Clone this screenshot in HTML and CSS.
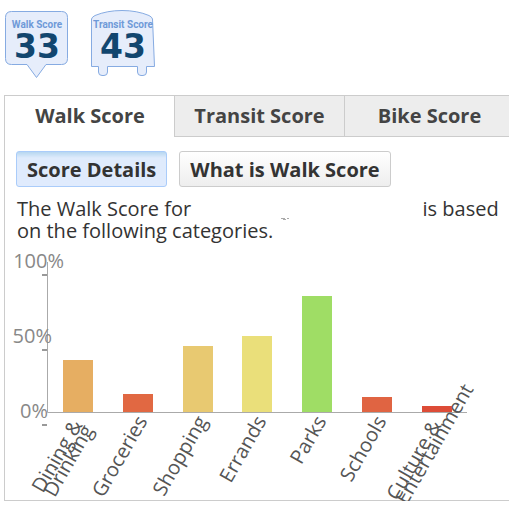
FILE: index.html
```html
<!DOCTYPE html>
<html lang="en">
<head>
    <meta charset="UTF-8">
    <meta name="viewport" content="width=device-width, initial-scale=1.0">
    <title>Walk Score</title>
    <link rel="stylesheet" href="styles.css">
</head>
<body>
    <div class="badges">
        <svg class="badge" width="66" height="72" viewBox="0 0 66 72">
            <path class="badge-shape" d="M7.5 1.5H57.5Q63.5 1.5 63.5 7.5V48.5Q63.5 54.5 57.5 54.5H42L32.5 67.5L23 54.5H7.5Q1.5 54.5 1.5 48.5V7.5Q1.5 1.5 7.5 1.5Z"/>
            <text class="badge-label" x="33" y="18">Walk Score</text>
            <text class="badge-score" x="33" y="48">33</text>
        </svg>
        <svg class="badge" width="66" height="72" viewBox="0 0 66 72">
            <path class="badge-shape" d="M1.5 9Q2 7 5 5.500Q17 0.500 32 0.500Q47 0.500 59 5.500Q62 7 62.500 9L64.500 56.500H56.500V62Q56.500 65.500 53 65.500H51Q47.500 65.500 47.500 62V56.500H17.500V62Q17.500 65.500 14 65.500H12Q8.500 65.500 8.500 62V56.500H1.500Z"/>
            <text class="badge-label" x="33" y="18">Transit Score</text>
            <text class="badge-score" x="33" y="48">43</text>
        </svg>
    </div>
    <div class="panel">
        <div class="tabs">
            <button type="button" class="tab active">Walk Score</button>
            <button type="button" class="tab">Transit Score</button>
            <button type="button" class="tab">Bike Score</button>
        </div>
        <div class="content">
            <div class="buttons">
                <button type="button" class="btn selected">Score Details</button>
                <button type="button" class="btn">What is Walk Score</button>
            </div>
            <p class="summary">The Walk Score for <svg class="address" width="221" height="6" viewBox="0 0 221 6"><path d="M85 4.500H89M87 5.500H90M91 4.500H93"/></svg> is based on the following categories.</p>
        </div>
        <svg class="chart" width="480" height="254" viewBox="0 0 480 254">
            <rect x="58" y="114" width="30" height="52" fill="#e6ae62"/>
            <rect x="118" y="148" width="30" height="18" fill="#e16842"/>
            <rect x="178" y="100" width="30" height="66" fill="#e8c971"/>
            <rect x="237" y="90" width="30" height="76" fill="#eadf7a"/>
            <rect x="297" y="50" width="30" height="116" fill="#9fdd65"/>
            <rect x="357" y="151" width="30" height="15" fill="#e06442"/>
            <rect x="417" y="160" width="30" height="6" fill="#dd4c37"/>
            <path class="axis" d="M42.500 16V166.500H462"/>
            <path class="tick" d="M37 29H42M37 104H42M37 179H42"/>
            <g class="scale">
                <text x="59" y="22">100%</text>
                <text x="47" y="97">50%</text>
                <text x="43" y="172">0%</text>
            </g>
            <g class="names">
                <text transform="translate(78 179) rotate(-60)">Dining &amp;</text>
                <text transform="translate(89 184) rotate(-60)">Drinking</text>
                <text transform="translate(143 175) rotate(-60)">Groceries</text>
                <text transform="translate(203 175) rotate(-60)">Shopping</text>
                <text transform="translate(262 175) rotate(-60)">Errands</text>
                <text transform="translate(322 175) rotate(-60)">Parks</text>
                <text transform="translate(382 175) rotate(-60)">Schools</text>
                <text transform="translate(437 179) rotate(-60)">Culture &amp;</text>
                <text transform="translate(469 143) rotate(-60)">Entertainment</text>
            </g>
        </svg>
    </div>
</body>
</html>
```
FILE: styles.css
```css
body {
    margin: 0;
    padding: 10px 0 0 4px;
    background: #fff;
    color: #333;
    font-family: "Open Sans", sans-serif;
    font-size: 20px;
    overflow: hidden;
}
.badges {
    display: flex;
    gap: 20px;
    height: 85px;
}
.badge-shape {
    fill: #e6edfb;
    stroke: #86abe2;
}
.badge-label {
    font-family: Roboto, sans-serif;
    font-size: 10px;
    font-weight: bold;
    fill: #6f9ad8;
    text-anchor: middle;
}
.badge-score {
    font-family: "DejaVu Sans", sans-serif;
    font-size: 33px;
    font-weight: bold;
    fill: #12466f;
    text-anchor: middle;
}
.panel {
    border: 1px solid #ccc;
    border-right: 0;
}
.tabs {
    display: flex;
    overflow: hidden;
}
.tab {
    flex: none;
    width: 170px;
    height: 41px;
    padding: 0;
    border: solid #ccc;
    border-width: 0 0 1px 1px;
    background: #ededed;
    color: #444;
    font: bold 20px/40px "Open Sans", sans-serif;
    cursor: pointer;
}
.tab.active {
    width: 169px;
    border-color: #fff;
    background: #fff;
}
.content {
    padding: 14px 8px 0 11px;
}
.buttons {
    display: flex;
    gap: 12px;
}
.btn {
    height: 36px;
    padding: 1px 10px 0;
    border: 1px solid #ccc;
    border-radius: 3px;
    background: linear-gradient(#fff, #eee);
    color: #333;
    font: bold 20px/34px "Open Sans", sans-serif;
    cursor: pointer;
}
.btn.selected {
    border-color: #aaccfa;
    background: linear-gradient(#b7d7f0, #dfebfc 6px, #e0ebfd);
}
.summary {
    margin: 11px 0 0 1px;
    line-height: 22px;
}
.address {
    vertical-align: -4px;
    fill: none;
    stroke: #aaa;
}
.chart {
    display: block;
    margin-top: 4px;
    overflow: visible;
}
.axis {
    fill: none;
    stroke: #aaa;
}
.tick {
    stroke: #999;
    stroke-width: 2px;
}
.scale {
    fill: #888;
    text-anchor: end;
}
.names {
    fill: #555;
    text-anchor: end;
}
```
